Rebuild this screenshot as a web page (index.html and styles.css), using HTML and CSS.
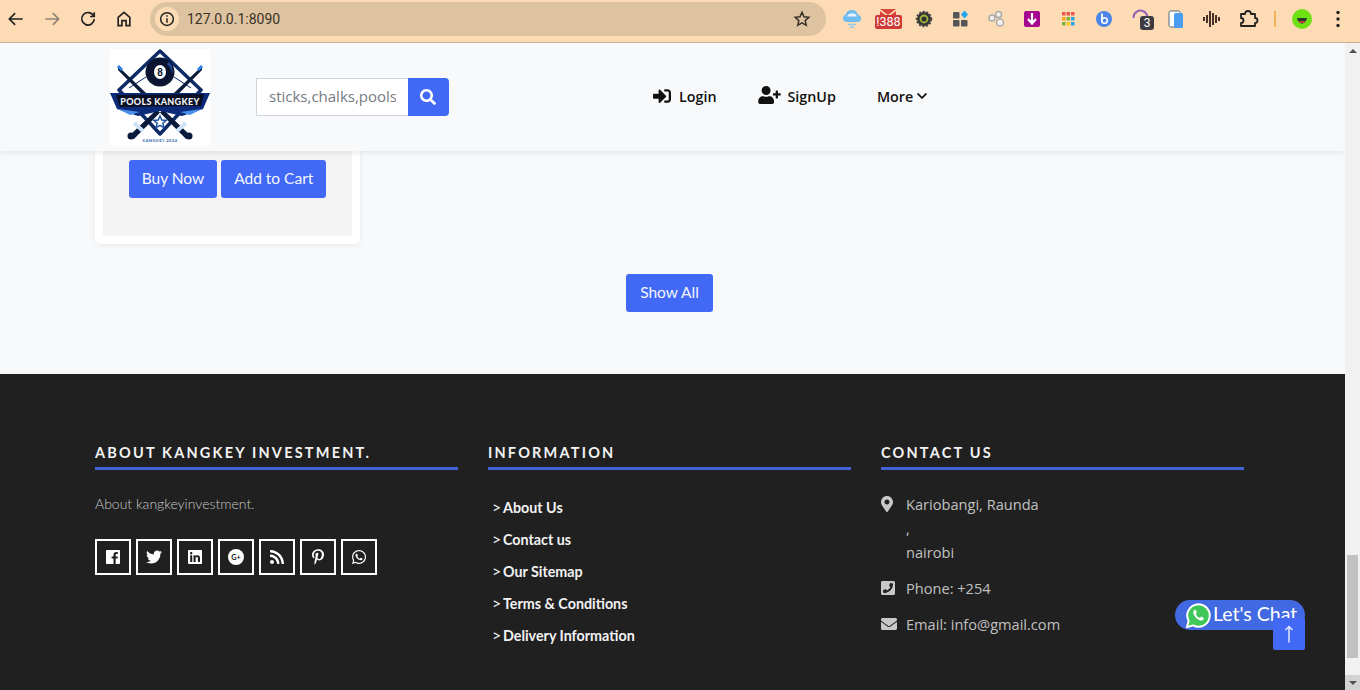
FILE: index.html
```html
<!DOCTYPE html>
<html>

<head>
    <title>Pools Kangkey</title>
    <link rel="stylesheet" href="styles.css">
</head>

<body>

    <!-- browser toolbar -->
    <div class="chrome">
        <div class="chrome-nav">
            <svg class="tool" viewBox="0 0 24 24"><path d="M20 12H5M11 5l-7 7 7 7" /></svg>
            <svg class="tool muted" viewBox="0 0 24 24"><path d="M4 12h15M13 5l7 7-7 7" /></svg>
            <svg class="tool" viewBox="0 0 24 24"><path d="M18.500 8A7.500 7.500 0 1 0 19.500 12M19.500 4v5h-5" /></svg>
            <svg class="tool" viewBox="0 0 24 24"><path d="M5 20V10l7-6 7 6v10h-4.500v-6h-5v6z" /></svg>
        </div>
        <div class="omnibox">
            <span class="site-info">
                <svg viewBox="0 0 24 24"><circle cx="12" cy="12" r="8.500" /><path d="M12 11v6M12 7v2" /></svg>
            </span>
            <span class="url">127.0.0.1:8090</span>
            <svg class="star" viewBox="0 0 24 24"><path d="M12 4l2.400 5.400 5.800.6-4.400 3.900 1.300 5.700L12 16.600l-5.100 3 1.300-5.700L3.800 10l5.800-.6z" /></svg>
        </div>
        <div class="extensions">
            <span class="ext"><svg viewBox="0 0 24 24"><path d="M6 15a3.800 3.800 0 0 1-.5-7.300 6.500 6.500 0 0 1 12.500 0 3.800 3.800 0 0 1 .5 7.300z" fill="#6fbdf0" /><path d="M7 9.500a5.500 5.500 0 0 1 10 0z" fill="#e8f5fd" /><path d="M8 17.500h8M10 20h4" stroke="#8cc8ee" stroke-width="1.500" /></svg></span>
            <span class="ext"><svg class="mail" viewBox="0 0 28 24"><path d="M6 2h16l-8 6z" fill="#d9453c" /><path d="M6 4l8 6 8-6v4H6z" fill="#d9453c" /></svg><b class="mail-count">!388</b></span>
            <span class="ext"><svg viewBox="0 0 24 24"><circle cx="12" cy="12" r="7" fill="#333" stroke="#444" stroke-width="2.500" stroke-dasharray="2 1.500" /><circle cx="12" cy="12" r="3.500" fill="none" stroke="#a5b83c" stroke-width="1.800" /></svg></span>
            <span class="ext"><svg viewBox="0 0 24 24"><rect x="5" y="5" width="6.500" height="6.500" rx="1" fill="#555" /><rect x="5" y="13" width="6.500" height="6.500" rx="1" fill="#555" /><rect x="13" y="13" width="6.500" height="6.500" rx="1" fill="#555" /><path d="M16.500 3.500l3.500 4-3.500 4-3.500-4z" fill="#1ea7f0" /></svg></span>
            <span class="ext"><svg viewBox="0 0 24 24"><g fill="#f4f0ea" stroke="#aaa" stroke-width="1.500"><circle cx="8" cy="11" r="3" /><circle cx="14.500" cy="7.500" r="3" /><circle cx="16" cy="15.500" r="3.500" /></g></svg></span>
            <span class="ext"><svg viewBox="0 0 24 24"><rect x="4" y="4" width="16" height="16" rx="2" fill="#a5068f" /><path d="M12 6v10M8 12l4 4.500 4-4.500" fill="none" stroke="#fff" stroke-width="2.200" /></svg></span>
            <span class="ext"><svg viewBox="0 0 24 24"><g><rect x="6" y="5" width="3.500" height="3.500" fill="#e8584f" /><rect x="10.500" y="5" width="3.500" height="3.500" fill="#e8584f" /><rect x="15" y="5" width="3.500" height="3.500" fill="#e8584f" /><rect x="6" y="10" width="3.500" height="3.500" fill="#f5a623" /><rect x="10.500" y="10" width="3.500" height="3.500" fill="#7cb342" /><rect x="15" y="10" width="3.500" height="3.500" fill="#29a3e0" /><rect x="6" y="15" width="3.500" height="3.500" fill="#7cb342" /><rect x="10.500" y="15" width="3.500" height="3.500" fill="#f5c623" /><rect x="15" y="15" width="3.500" height="3.500" fill="#29a3e0" /></g></svg></span>
            <span class="ext"><svg viewBox="0 0 24 24"><circle cx="12" cy="12" r="8" fill="#4a86ea" /><path d="M10 6.500v8" stroke="#fff" stroke-width="1.800" /><circle cx="12.500" cy="13.500" r="2.800" fill="none" stroke="#fff" stroke-width="1.600" /></svg></span>
            <span class="ext"><svg viewBox="0 0 24 24"><path d="M17 15a7 7 0 1 0-11.500-5" transform="translate(0 1)" fill="none" stroke="#8e63b5" stroke-width="2" /></svg><b class="ext-count">3</b></span>
            <span class="ext"><svg viewBox="0 0 24 24"><rect x="5" y="4" width="11" height="16" rx="1.500" fill="#fff" stroke="#567" stroke-width="1" /><rect x="10" y="6" width="9" height="15" rx="1.500" fill="#4a9df0" /></svg></span>
            <span class="ext"><svg viewBox="0 0 24 24"><path d="M4 10v4M7 8v8M10 4v16M13 6v12M16 8v8M19 10v4" stroke="#2a1410" stroke-width="1.700" fill="none" /></svg></span>
            <span class="ext"><svg viewBox="0 0 24 24"><path d="M5 7h4a3 3 0 0 1 6 0h4v4a2.500 2.500 0 0 1 0 5v3H5v-3a2.500 2.500 0 0 0 0-5z" fill="none" stroke="#222" stroke-width="1.800" stroke-linejoin="round" /></svg></span>
            <span class="ext-sep"></span>
            <span class="ext"><svg viewBox="0 0 24 24"><circle cx="12" cy="12" r="10" fill="#6ee014" /><path d="M7 11h10l-1 3-4 3-4-3z" fill="#2a3a2a" /><path d="M9 14h6v2H9z" fill="#c04040" /></svg></span>
            <span class="ext"><svg viewBox="0 0 24 24"><circle cx="12" cy="5.500" r="1.700" fill="#222" /><circle cx="12" cy="12" r="1.700" fill="#222" /><circle cx="12" cy="18.500" r="1.700" fill="#222" /></svg></span>
        </div>
    </div>

    <div class="viewport">
        <div class="page">

            <div class="header">
                <svg class="logo" viewBox="0 0 100 97">
                    <rect width="100" height="97" fill="#fff" />
                    <path d="M50 2L91 41 50 85 9 41z" fill="#fff" stroke="#0c2a66" stroke-width="3.500" stroke-linejoin="round" />
                    <path d="M19 39L36 28M81 39L64 28" stroke="#0c2a66" stroke-width="1" />
                    <path d="M8 17L11 20 82 88 76 90 8 21zM92 17L89 20 18 88 24 90 92 21z" fill="#0a1a3a" />
                    <path d="M8 17l4 4M92 17l-4 4" stroke="#2f7fe0" stroke-width="3" />
                    <path d="M24 74L33 82M76 74L67 82" stroke="#cfe2f8" stroke-width="4" />
                    <circle cx="21" cy="87" r="3.500" fill="#0a1a3a" />
                    <circle cx="79" cy="87" r="3.500" fill="#0a1a3a" />
                    <circle cx="50" cy="23" r="14.500" fill="#0a1430" />
                    <path d="M59 13a13 13 0 0 1 3 12 13 13 0 0 0-5-10z" fill="#1d4fa0" />
                    <ellipse cx="50" cy="23" rx="6" ry="7" fill="#fff" />
                    <text x="50" y="26.500" class="logo-eight">8</text>
                    <path d="M0 44L100 44 93 60 72 67 50 62 28 67 7 60z" fill="#0b2a7a" />
                    <path d="M8 60L30 63 20 66zM92 60L70 63 80 66z" fill="#4a90ea" />
                    <path d="M6 46L94 45 91 57 10 58z" fill="#0a0f24" />
                    <text x="50" y="55.500" class="logo-name">POOLS KANGKEY</text>
                    <path d="M50 67l1.800 4 4.400.4-3.300 2.900 1 4.300L50 76.400l-3.900 2.200 1-4.300-3.300-2.900 4.400-.4z" fill="#fff" stroke="#1c4fa8" stroke-width="1.500" />
                    <text x="50" y="93" class="logo-small">KANGKEY.2024</text>
                </svg>

                <div class="search">
                    <input type="text" placeholder="sticks,chalks,pools">
                    <button class="search-btn" type="button">
                        <svg viewBox="0 0 512 512"><path d="M505 442.700L405.300 343c-4.500-4.500-10.600-7-17-7H372c27.600-35.300 44-79.700 44-128C416 93.100 322.900 0 208 0S0 93.100 0 208s93.100 208 208 208c48.300 0 92.700-16.400 128-44v16.300c0 6.400 2.500 12.500 7 17l99.700 99.700c9.400 9.400 24.600 9.400 33.900 0l28.300-28.300c9.400-9.400 9.400-24.600.100-34zM208 336c-70.700 0-128-57.200-128-128 0-70.700 57.200-128 128-128 70.700 0 128 57.200 128 128 0 70.700-57.200 128-128 128z" /></svg>
                    </button>
                </div>

                <ul class="nav">
                    <li>
                        <a href="#login">
                            <svg class="nav-login" viewBox="0 0 512 512"><path d="M416 448h-84c-6.600 0-12-5.400-12-12v-40c0-6.600 5.400-12 12-12h84c17.700 0 32-14.300 32-32V160c0-17.700-14.300-32-32-32h-84c-6.600 0-12-5.400-12-12V76c0-6.600 5.400-12 12-12h84c53 0 96 43 96 96v192c0 53-43 96-96 96zm-47-201L201 79c-15-15-41-4.500-41 17v96H24c-13.300 0-24 10.700-24 24v96c0 13.300 10.700 24 24 24h136v96c0 21.500 26 32 41 17l168-168c9.300-9.400 9.300-24.600 0-34z" /></svg>
                            Login
                        </a>
                    </li>
                    <li>
                        <a href="#signup">
                            <svg class="nav-signup" viewBox="0 0 640 512"><path d="M624 208h-64v-64c0-8.800-7.200-16-16-16h-32c-8.800 0-16 7.200-16 16v64h-64c-8.800 0-16 7.200-16 16v32c0 8.800 7.200 16 16 16h64v64c0 8.800 7.200 16 16 16h32c8.800 0 16-7.200 16-16v-64h64c8.800 0 16-7.200 16-16v-32c0-8.800-7.200-16-16-16zm-400 48c70.700 0 128-57.300 128-128S294.700 0 224 0 96 57.300 96 128s57.300 128 128 128zm89.600 32h-16.700c-22.200 10.200-46.900 16-72.900 16s-50.600-5.800-72.900-16h-16.700C60.200 288 0 348.200 0 422.400V464c0 26.500 21.500 48 48 48h352c26.500 0 48-21.500 48-48v-41.600c0-74.200-60.200-134.400-134.400-134.400z" /></svg>
                            SignUp
                        </a>
                    </li>
                    <li>
                        <a href="#more" class="nav-more">
                            More
                            <svg class="nav-caret" viewBox="0 0 448 512"><path d="M207.029 381.476L12.686 187.132c-9.373-9.373-9.373-24.569 0-33.941l22.667-22.667c9.357-9.357 24.522-9.375 33.901-.04L224 284.505l154.745-154.021c9.379-9.335 24.544-9.317 33.901.04l22.667 22.667c9.373 9.373 9.373 24.569 0 33.941L240.971 381.476c-9.373 9.372-24.569 9.372-33.942 0z" /></svg>
                        </a>
                    </li>
                </ul>
            </div>

            <div class="products">
                <div class="card">
                    <div class="card-body">
                        <a href="#buy" class="btn">Buy Now</a>
                        <a href="#cart" class="btn">Add to Cart</a>
                    </div>
                </div>
                <div class="show-all">
                    <a href="#all" class="btn">Show All</a>
                </div>
            </div>

            <div class="footer">
                <div class="footer-col">
                    <h4>About Kangkey Investment.</h4>
                    <p class="about">About kangkeyinvestment.</p>
                    <div class="social">
                        <a href="#fb"><svg viewBox="0 0 448 512"><path d="M448 56.700v398.500c0 13.700-11.100 24.700-24.700 24.700H309.100V306.500h58.200l8.700-67.600h-67v-43.200c0-19.600 5.400-32.900 33.500-32.900h35.800v-60.500c-6.200-.8-27.400-2.700-52.200-2.700-51.600 0-87 31.500-87 89.400v49.900h-58.400v67.600h58.400V480H24.700C11.100 480 0 468.900 0 455.300V56.700C0 43.100 11.100 32 24.700 32h398.500c13.700 0 24.800 11.100 24.800 24.700z" /></svg></a>
                        <a href="#tw"><svg class="wide" viewBox="0 0 512 512"><path d="M459.370 151.716c.325 4.548.325 9.097.325 13.645 0 138.720-105.583 298.558-298.558 298.558-59.452 0-114.680-17.219-161.137-47.106 8.447.974 16.568 1.299 25.340 1.299 49.055 0 94.213-16.568 130.274-44.832-46.132-.975-84.792-31.188-98.112-72.772 6.498.974 12.995 1.624 19.818 1.624 9.421 0 18.843-1.300 27.614-3.573-48.081-9.747-84.143-51.980-84.143-102.985v-1.299c13.969 7.797 30.214 12.670 47.431 13.319-28.264-18.843-46.781-51.005-46.781-87.391 0-19.492 5.197-37.360 14.294-52.954 51.655 63.675 129.300 105.258 216.365 109.807-1.624-7.797-2.599-15.918-2.599-24.040 0-57.828 46.782-104.934 104.934-104.934 30.213 0 57.502 12.670 76.670 33.137 23.715-4.548 46.456-13.320 66.599-25.340-7.798 24.366-24.366 44.833-46.132 57.827 21.117-2.273 41.584-8.122 60.426-16.243-14.292 20.791-32.161 39.308-52.628 54.253z" /></svg></a>
                        <a href="#in"><svg viewBox="0 0 448 512"><path d="M416 32H31.900C14.300 32 0 46.500 0 64.300v383.400C0 465.500 14.300 480 31.900 480H416c17.600 0 32-14.500 32-32.300V64.300c0-17.800-14.400-32.300-32-32.300zM135.400 416H69V202.200h66.500V416zm-33.200-243c-21.300 0-38.500-17.300-38.500-38.500S80.900 96 102.200 96c21.200 0 38.500 17.300 38.500 38.500 0 21.300-17.200 38.500-38.500 38.500zm282.100 243h-66.400V312c0-24.800-.5-56.700-34.500-56.700-34.600 0-39.900 27-39.900 54.900V416h-66.400V202.200h63.700v29.200h.9c8.900-16.800 30.600-34.500 62.900-34.500 67.200 0 79.700 44.300 79.700 101.900V416z" /></svg></a>
                        <a href="#gp"><svg class="wide" viewBox="0 0 24 24"><circle cx="12" cy="12" r="12" fill="#fff" /><text x="12" y="16" class="gplus">G+</text></svg></a>
                        <a href="#rss"><svg viewBox="0 0 448 512"><path d="M128.081 415.959c0 35.369-28.672 64.041-64.041 64.041S0 451.328 0 415.959s28.672-64.041 64.041-64.041 64.040 28.673 64.040 64.041zm175.660 47.250c-8.354-154.600-132.185-278.587-286.950-286.950C7.656 175.765 0 183.105 0 192.253v48.069c0 8.415 6.490 15.472 14.887 16.018 111.832 7.284 201.473 96.702 208.772 208.772.547 8.397 7.604 14.887 16.018 14.887h48.069c9.149.001 16.489-7.655 15.995-16.790zm144.249.288C439.596 229.677 251.465 40.445 16.503 32.010 7.473 31.686 0 38.981 0 48.016v48.068c0 8.625 6.835 15.645 15.453 15.999 191.179 7.839 344.627 161.316 352.465 352.465.353 8.618 7.373 15.453 15.999 15.453h48.068c9.034-.001 16.329-7.474 16.005-16.504z" /></svg></a>
                        <a href="#pin"><svg viewBox="0 0 384 512"><path d="M204 6.500C101.400 6.500 0 74.900 0 185.600 0 256 39.600 296 63.600 296c9.900 0 15.600-27.600 15.600-35.400 0-9.300-23.700-29.100-23.700-67.800 0-80.400 61.200-137.400 140.400-137.400 68.100 0 118.500 38.700 118.500 109.800 0 53.100-21.300 152.700-90.300 152.700-24.900 0-46.200-18-46.200-43.800 0-37.800 26.400-74.400 26.400-113.400 0-66.200-93.900-54.200-93.900 25.800 0 16.800 2.100 35.400 9.600 50.700-13.800 59.400-42 147.900-42 209.100 0 18.900 2.700 37.500 4.500 56.400 3.400 3.800 1.700 3.400 6.900 1.500 50.400-69 48.600-82.500 71.400-172.800 12.300 23.400 44.100 36 69.300 36 106.200 0 153.900-103.500 153.900-196.800C384 71.300 298.200 6.500 204 6.500z" /></svg></a>
                        <a href="#wa"><svg class="wide" viewBox="0 0 448 512"><path d="M380.900 97.100C339 55.100 283.200 32 223.900 32c-122.400 0-222 99.600-222 222 0 39.100 10.200 77.300 29.600 111L0 480l117.700-30.900c32.400 17.700 68.900 27 106.100 27h.1c122.300 0 224.100-99.600 224.100-222 0-59.300-25.200-115-67.100-157zm-157 341.600c-33.200 0-65.700-8.900-94-25.700l-6.700-4-69.800 18.300L72 359.200l-4.400-7c-18.500-29.400-28.200-63.300-28.200-98.200 0-101.700 82.800-184.500 184.600-184.500 49.300 0 95.600 19.200 130.400 54.100 34.800 34.900 56.200 81.200 56.100 130.500 0 101.800-84.900 184.600-186.600 184.600zm101.200-138.200c-5.500-2.800-32.800-16.200-37.900-18-5.100-1.900-8.800-2.800-12.500 2.800-3.700 5.600-14.300 18-17.600 21.800-3.200 3.700-6.500 4.200-12 1.400-32.600-16.300-54-29.100-75.500-66-5.700-9.800 5.700-9.100 16.300-30.300 1.800-3.700.9-6.900-.5-9.700-1.400-2.800-12.500-30.100-17.100-41.200-4.500-10.800-9.100-9.300-12.500-9.500-3.200-.2-6.900-.2-10.600-.2-3.700 0-9.700 1.400-14.800 6.900-5.100 5.600-19.400 19-19.400 46.300 0 27.300 19.900 53.700 22.600 57.400 2.800 3.700 39.100 59.700 94.800 83.800 35.200 15.200 49 16.500 66.600 13.900 10.700-1.600 32.800-13.400 37.400-26.400 4.600-13 4.600-24.100 3.200-26.400-1.300-2.500-5-3.900-10.500-6.600z" /></svg></a>
                    </div>
                </div>

                <div class="footer-col">
                    <h4>Information</h4>
                    <ul class="links">
                        <li><a href="#about">About Us</a></li>
                        <li><a href="#contact">Contact us</a></li>
                        <li><a href="#sitemap">Our Sitemap</a></li>
                        <li><a href="#terms">Terms &amp; Conditions</a></li>
                        <li><a href="#delivery">Delivery Information</a></li>
                    </ul>
                </div>

                <div class="footer-col">
                    <h4>Contact Us</h4>
                    <ul class="contact">
                        <li>
                            <span class="contact-icon"><svg class="i-pin" viewBox="0 0 384 512"><path d="M172.268 501.670C26.970 291.031 0 269.413 0 192 0 85.961 85.961 0 192 0s192 85.961 192 192c0 77.413-26.970 99.031-172.268 309.670-9.535 13.774-29.930 13.773-39.464 0zM192 272c44.183 0 80-35.817 80-80s-35.817-80-80-80-80 35.817-80 80 35.817 80 80 80z" /></svg></span>
                            <span>Kariobangi, Raunda<br>,<br>nairobi</span>
                        </li>
                        <li>
                            <span class="contact-icon"><svg class="i-phone" viewBox="0 0 448 512"><path d="M400 32H48C21.490 32 0 53.490 0 80v352c0 26.510 21.490 48 48 48h352c26.510 0 48-21.490 48-48V80c0-26.510-21.490-48-48-48zM94 416c-7.033 0-13.057-4.873-14.616-11.627l-14.998-65a15 15 0 0 1 8.707-17.160l69.998-29.999a15 15 0 0 1 17.518 4.289l30.997 37.885c48.944-22.963 88.297-62.858 110.762-110.764l-37.886-30.997a15.001 15.001 0 0 1-4.289-17.518l30-69.998a15 15 0 0 1 17.160-8.707l65 14.998A14.997 14.997 0 0 1 384 126c0 160.292-129.945 290-290 290z" /></svg></span>
                            <span>Phone: +254</span>
                        </li>
                        <li>
                            <span class="contact-icon"><svg class="i-mail" viewBox="0 0 512 512"><path d="M502.300 190.800c3.900-3.100 9.700-.2 9.700 4.700V400c0 26.500-21.500 48-48 48H48c-26.500 0-48-21.500-48-48V195.600c0-5 5.700-7.800 9.700-4.700 22.400 17.400 52.100 39.500 154.100 113.600 21.100 15.400 56.700 47.800 92.200 47.600 35.700.3 72-32.800 92.300-47.600 102-74.100 131.600-96.300 154-113.700zM256 320c23.200.4 56.600-29.200 73.400-41.400 132.700-96.300 142.800-104.700 173.400-128.700 5.800-4.500 9.200-11.500 9.200-18.900v-19c0-26.500-21.500-48-48-48H48C21.500 64 0 85.500 0 112v19c0 7.400 3.400 14.300 9.200 18.900 30.600 23.900 40.700 32.400 173.400 128.700 16.800 12.200 50.200 41.800 73.400 41.400z" /></svg></span>
                            <span>Email: info@gmail.com</span>
                        </li>
                    </ul>
                </div>
            </div>

            <!-- floating widgets -->
            <a href="#chat" class="chat">
                <svg class="chat-logo" viewBox="0 0 30 30">
                    <path d="M2 28l2-7a12.500 12.500 0 1 1 5 5z" fill="#3fc75a" stroke="#fff" stroke-width="2.200" stroke-linejoin="round" />
                    <path d="M11 8.500c-2 1-2.500 3-1 6 1.500 3 4 5 7 6 2 .5 3.500-.5 4-2.500l-3-1.800-1.500 1.500c-2-.8-3.700-2.500-4.500-4.500l1.300-1.500-1.500-3.200z" fill="#fff" />
                </svg>
                <span class="chat-text">Let's Chat</span>
            </a>
            <a href="#top" class="to-top">
                <svg viewBox="0 0 12 20"><path d="M6 18.500V2.500M2.500 6L6 2.500 9.500 6" /></svg>
            </a>
        </div>

        <div class="scrollbar">
            <span class="arrow arrow-up"></span>
            <span class="track"><span class="thumb"></span></span>
            <span class="arrow arrow-down"></span>
        </div>
    </div>

</body>

</html>
```

FILE: styles.css
```css
* {
    box-sizing: border-box;
}

body {
    margin: 0px;
    height: 690px;
    overflow: hidden;
    font-family: "Lato", sans-serif;
    background: #f8f9fb;
}

a {
    text-decoration: none;
}

ul {
    list-style: none;
    margin: 0px;
    padding: 0px;
}

/* browser toolbar */
.chrome {
    display: flex;
    align-items: center;
    height: 43px;
    padding-bottom: 5px;
    background: #fddcb5;
    border-bottom: 1px solid #c9b08f;
}

.chrome-nav {
    display: flex;
    gap: 16px;
    width: 150px;
    padding-left: 6px;
}

.tool {
    width: 20px;
    height: 20px;
    fill: none;
    stroke: #222;
    stroke-width: 2;
}

.tool.muted {
    stroke: #8f8273;
}

.omnibox {
    display: flex;
    align-items: center;
    width: 676px;
    height: 34px;
    margin-top: 1px;
    padding: 0px 14px 0px 5px;
    border-radius: 17px;
    background: #dec3a0;
}

.site-info {
    display: flex;
    align-items: center;
    justify-content: center;
    width: 24px;
    height: 24px;
    border-radius: 50%;
    background: #fddcb5;
}

.site-info svg {
    width: 18px;
    height: 18px;
    fill: none;
    stroke: #222;
    stroke-width: 2;
}

.url {
    flex: 1;
    margin-left: 8px;
    font: 14px "Roboto", sans-serif;
    color: #3a3128;
}

.star {
    width: 20px;
    height: 20px;
    fill: none;
    stroke: #3a3128;
    stroke-width: 1.800;
}

.extensions {
    display: flex;
    align-items: center;
    gap: 12px;
    margin-top: 1px;
    padding-left: 14px;
}

.ext {
    position: relative;
    display: block;
    width: 24px;
    height: 24px;
}

.ext svg {
    display: block;
    width: 24px;
    height: 24px;
}

.ext .mail {
    width: 28px;
    margin-left: -2px;
}

.mail-count {
    position: absolute;
    left: -1px;
    top: 8px;
    width: 27px;
    height: 14px;
    border-radius: 2px;
    background: #d03a36;
    color: #fff;
    font: 12.500px/14px "Roboto", sans-serif;
    text-align: center;
}

.ext-count {
    position: absolute;
    left: 12px;
    top: 9px;
    width: 14px;
    height: 14px;
    border-radius: 3px;
    background: #3c3c40;
    color: #fff;
    font: 12px/14px "Roboto", sans-serif;
    text-align: center;
}

.ext-sep {
    width: 2px;
    height: 16px;
    margin: 0px 2px;
    background: #f5b25a;
}

/* page */
.viewport {
    display: flex;
    height: 647px;
}

.page {
    position: relative;
    flex: 1;
    overflow: hidden;
}

.header {
    position: relative;
    z-index: 2;
    display: flex;
    align-items: center;
    height: 108px;
    padding-left: 110px;
    background: #f8f9fb;
    box-shadow: 0px 2px 6px rgba(0, 0, 0, 0.08);
}

.logo {
    display: block;
    width: 100px;
    height: 97px;
}

.logo-eight {
    font: bold 10px "Liberation Sans", sans-serif;
    text-anchor: middle;
    fill: #0a1430;
}

.logo-name {
    font: 900 9px "Lato", sans-serif;
    letter-spacing: 0.300px;
    text-anchor: middle;
    fill: #eef2f8;
}

.logo-small {
    font: bold 4px "Lato", sans-serif;
    letter-spacing: 0.500px;
    text-anchor: middle;
    fill: #2c5fa8;
}

.search {
    display: flex;
    margin-left: 46px;
}

.search input {
    width: 151.500px;
    height: 38px;
    padding: 0px 12px 2px;
    border: 1px solid #ced4da;
    border-right: 0px;
    outline: none;
    background: #fff;
    font: 15px "Open Sans", sans-serif;
}

.search input::placeholder {
    color: #757b82;
}

.search-btn {
    display: flex;
    align-items: center;
    justify-content: center;
    width: 41.500px;
    height: 38px;
    border: 0px;
    border-radius: 0px 4px 4px 0px;
    background: #4169f5;
}

.search-btn svg {
    width: 16px;
    height: 16px;
    fill: #fff;
}

.nav {
    display: flex;
    align-items: center;
    gap: 41px;
    margin: -2px 0px 0px 204px;
}

.nav a {
    display: flex;
    align-items: center;
    color: #111;
    font: 600 14.300px "Open Sans", sans-serif;
}

.nav svg {
    fill: #111;
}

.nav-login {
    width: 18px;
    height: 18px;
    margin-right: 8px;
}

.nav-signup {
    width: 23px;
    height: 18px;
    margin: -2px 7px 0px 0px;
}

.nav-caret {
    width: 10px;
    height: 12px;
    margin-left: 4px;
}

.products {
    height: 223px;
    padding: 0px 101px 0px 95px;
}

.card {
    width: 265px;
    height: 93px;
    padding: 0px 8px 8px;
    border-radius: 0px 0px 5px 5px;
    background: #fff;
    box-shadow: 0px 1px 6px rgba(0, 0, 0, 0.07);
}

.card-body {
    display: flex;
    justify-content: center;
    gap: 4px;
    height: 85px;
    padding-top: 9px;
    background: #f4f4f4;
}

.btn {
    display: block;
    height: 38px;
    padding: 0px 13px;
    border-radius: 3px;
    background: #4169f5;
    color: #f4f6ff;
    font-size: 15.500px;
    line-height: 36px;
}

.show-all {
    display: flex;
    justify-content: center;
    margin-top: 30px;
}

.show-all .btn {
    padding: 0px 14px;
}

/* footer */
.footer {
    display: grid;
    grid-template-columns: 363px 363px 363px;
    gap: 30px;
    height: 316px;
    padding: 69px 0px 0px 95px;
    background: #202020;
}

.footer h4 {
    margin: 0px;
    padding-bottom: 4px;
    border-bottom: 3px solid #4362d5;
    color: #f2f2f2;
    font-size: 14.500px;
    font-weight: 700;
    line-height: 20px;
    letter-spacing: 2.200px;
    text-transform: uppercase;
}

.about {
    margin: 25px 0px 0px;
    color: #c8c8c8;
    font-size: 14px;
    font-weight: 300;
    line-height: 18px;
}

.social {
    display: flex;
    gap: 5px;
    margin-top: 26px;
}

.social a {
    display: flex;
    align-items: center;
    justify-content: center;
    width: 36px;
    height: 36px;
    border: 2px solid #fff;
}

.social svg {
    width: 14px;
    height: 16px;
    fill: #fff;
}

.social svg.wide {
    width: 16px;
    height: 16px;
}

.gplus {
    font: bold 11px "Lato", sans-serif;
    text-anchor: middle;
    fill: #202020;
}

.links {
    padding: 21px 0px 0px 4px;
}

.links li {
    height: 32px;
    color: #f2f2f2;
    font-size: 14.300px;
    font-weight: 700;
    line-height: 32px;
}

.links li::before {
    content: ">";
    display: inline-block;
    width: 11px;
    font-size: 16px;
    font-weight: 400;
}

.links a {
    color: #f2f2f2;
}

.contact {
    margin-top: 22px;
    color: #c0c0c0;
    font: 14.600px/24px "Open Sans", sans-serif;
}

.contact li {
    display: flex;
    margin-bottom: 12px;
}

.contact-icon {
    display: flex;
    align-items: center;
    width: 16px;
    height: 24px;
    margin-right: 9px;
}

.contact svg {
    display: block;
    fill: #c8c8c8;
}

.i-pin {
    width: 12px;
    height: 16px;
}

.i-phone {
    width: 14px;
    height: 16px;
}

.i-mail {
    width: 16px;
    height: 16px;
}

.chat {
    position: absolute;
    left: 1175px;
    top: 557px;
    display: flex;
    align-items: center;
    width: 130px;
    height: 30px;
    padding-left: 10px;
    border-radius: 15px;
    background: #4169e1;
    color: #fff;
    font-size: 19.500px;
}

.chat-text {
    margin-top: -3px;
}

.chat-logo {
    width: 27px;
    height: 27px;
    margin-right: 1px;
}

.to-top {
    position: absolute;
    left: 1273px;
    top: 575px;
    z-index: 3;
    display: flex;
    align-items: center;
    justify-content: center;
    width: 32px;
    height: 32px;
    border-radius: 2px;
    background: #4169f5;
}

.to-top svg {
    width: 12px;
    height: 20px;
    fill: none;
    stroke: #dfe6ff;
    stroke-width: 1.500;
}

/* fake scrollbar */
.scrollbar {
    display: flex;
    flex-direction: column;
    width: 15px;
    background: #f1f1f1;
}

.arrow {
    display: flex;
    align-items: center;
    justify-content: center;
    height: 15px;
}

.arrow::before {
    content: "";
    border-left: 4px solid transparent;
    border-right: 4px solid transparent;
}

.arrow-up::before {
    border-bottom: 4px solid #505050;
}

.arrow-down {
    background: #d2d2d2;
}

.arrow-down::before {
    border-top: 4px solid #505050;
}

.track {
    flex: 1;
    padding-top: 497px;
}

.thumb {
    display: block;
    height: 103px;
    margin: 0px 2px;
    background: #c1c1c1;
}
```
